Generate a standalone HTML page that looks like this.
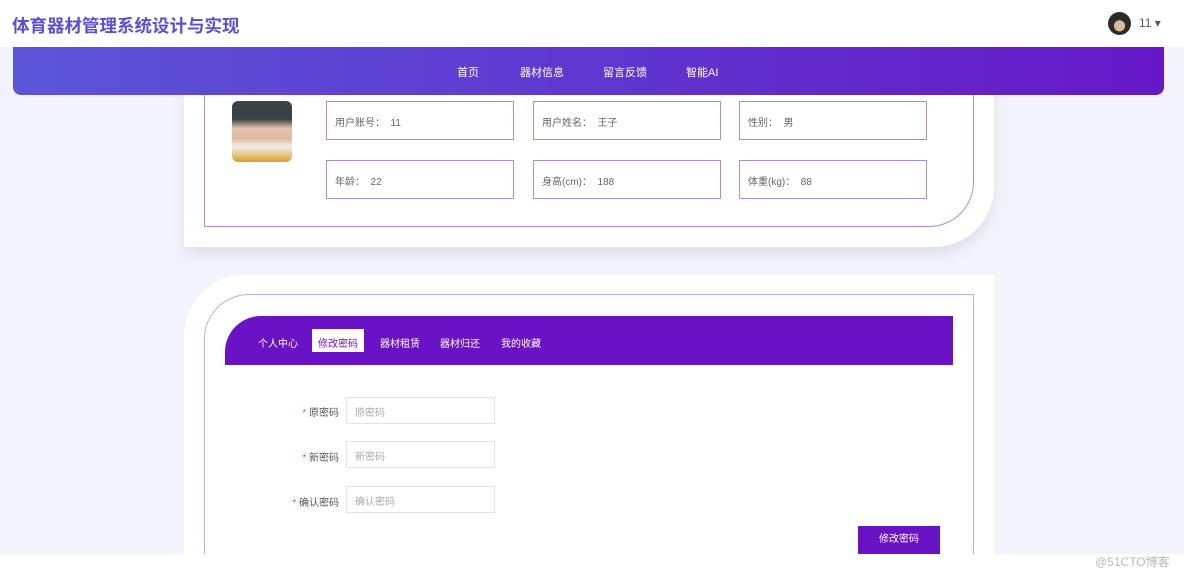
<!DOCTYPE html>
<html><head><meta charset="utf-8"><style>
*{margin:0;padding:0;box-sizing:border-box}
body{width:1184px;height:573px;overflow:hidden;background:#fff;font-family:"Liberation Sans","Noto Sans CJK SC",sans-serif;position:relative}
.bg{position:absolute;left:0;top:47px;width:1184px;height:507px;background:#f3f3fb}
.hdr{position:absolute;left:0;top:0;width:1184px;height:47px;background:#fff}
.title{position:absolute;left:12px;top:13px;font-size:17.5px;font-weight:bold;color:#5b4fd6}
.user{position:absolute;left:1108px;top:12px;width:23px;height:23px;border-radius:50%;background:radial-gradient(circle at 50% 60%,#d9b89c 30%,#2b2b2b 32%)}
.un{position:absolute;left:1139px;top:16px;font-size:12px;color:#555}
.nav{position:absolute;left:13px;top:47px;width:1151px;height:48px;border-radius:0 0 8px 8px;background:linear-gradient(90deg,#5b55d8,#6518c8);z-index:3}
.nav span{position:absolute;top:17px;font-size:11px;color:#fff}
.card{position:absolute;background:#fff}
.c1{left:184px;top:60px;width:810px;height:187px;border-radius:0 0 60px 0;box-shadow:0 8px 14px rgba(0,0,0,.08)}
.b1{position:absolute;left:20px;top:0;width:770px;height:167px;border:1.5px solid #b48ad8;border-radius:30px 0 45px 0}
.av{position:absolute;left:48px;top:41px;width:60px;height:61px;border-radius:6px;background:linear-gradient(180deg,#3a4446 0%,#3a4446 30%,#e8c4ae 45%,#e0b9a2 62%,#f2efe9 75%,#d8a12b 100%)}
.f{position:absolute;width:188px;height:39px;border:1.5px solid #b48ad8;font-size:10px;color:#666;padding:12px 0 0 8px}
.c2{left:184px;top:275px;width:810px;height:279px;border-radius:60px 0 0 0;overflow:hidden}
.b2{position:absolute;left:20px;top:19px;width:770px;height:300px;border:1.5px solid #c9a8e4;border-radius:45px 0 0 0}
.tabs{position:absolute;left:41px;top:41px;width:728px;height:49px;background:#6a12c6;border-radius:36px 0 0 0}
.tabs span{position:absolute;top:19px;font-size:10px;color:#fff}
.tabs .on{top:13px;background:#fff;color:#6a12c6;padding:6px 6px;height:23px}
.lb{position:absolute;font-size:10px;color:#555;text-align:right;width:80px}
.lb b{color:#e55;font-weight:normal}
.in{position:absolute;left:162px;width:149px;height:27px;border:1px solid #e2e2e2;font-size:10px;color:#aaa;padding:6px 8px}
.btn{position:absolute;left:674px;top:251px;width:82px;height:28px;background:#6a12c6;color:#fff;font-size:10px;text-align:center;line-height:28px}
.wm{position:absolute;left:1095px;top:553px;font-size:12px;color:#bbb}
</style></head><body>
<div class="bg"></div>
<div class="hdr"><div class="title">体育器材管理系统设计与实现</div><div class="user"></div><div class="un">11 ▾</div></div>
<div class="nav"><span style="left:444px">首页</span><span style="left:507px">器材信息</span><span style="left:590px">留言反馈</span><span style="left:673px">智能AI</span></div>
<div class="card c1"><div class="b1"></div><div class="av"></div>
<div class="f" style="left:142px;top:41px">用户账号：&nbsp;&nbsp;11</div>
<div class="f" style="left:349px;top:41px">用户姓名：&nbsp;&nbsp;王子</div>
<div class="f" style="left:555px;top:41px">性别：&nbsp;&nbsp;男</div>
<div class="f" style="left:142px;top:100px">年龄：&nbsp;&nbsp;22</div>
<div class="f" style="left:349px;top:100px">身高(cm)：&nbsp;&nbsp;188</div>
<div class="f" style="left:555px;top:100px">体重(kg)：&nbsp;&nbsp;88</div>
</div>
<div class="card c2"><div class="b2"></div>
<div class="tabs"><span style="left:33px">个人中心</span><span class="on" style="left:87px">修改密码</span><span style="left:155px">器材租赁</span><span style="left:215px">器材归还</span><span style="left:276px">我的收藏</span></div>
<div class="lb" style="left:75px;top:129px"><b>* </b>原密码</div><div class="in" style="top:122px">原密码</div>
<div class="lb" style="left:75px;top:174px"><b>* </b>新密码</div><div class="in" style="top:166px">新密码</div>
<div class="lb" style="left:75px;top:219px"><b>* </b>确认密码</div><div class="in" style="top:211px">确认密码</div>
<div class="btn">修改密码</div>
</div>
<div class="wm">@51CTO博客</div>
</body></html>
